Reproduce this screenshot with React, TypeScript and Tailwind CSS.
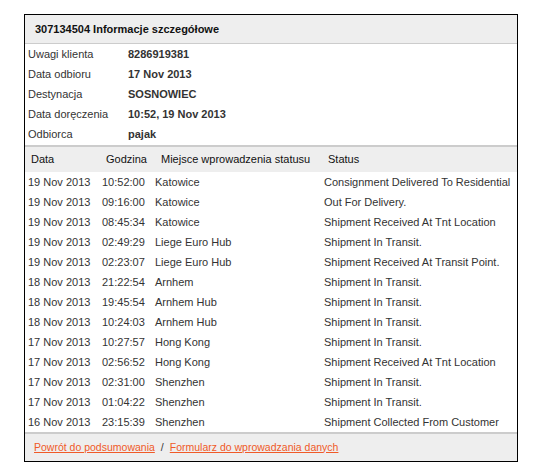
const info = [
  ["Uwagi klienta", "8286919381"],
  ["Data odbioru", "17 Nov 2013"],
  ["Destynacja", "SOSNOWIEC"],
  ["Data doręczenia", "10:52, 19 Nov 2013"],
  ["Odbiorca", "pajak"],
];
const rows = [
  ["19 Nov 2013", "10:52:00", "Katowice", "Consignment Delivered To Residential"],
  ["19 Nov 2013", "09:16:00", "Katowice", "Out For Delivery."],
  ["19 Nov 2013", "08:45:34", "Katowice", "Shipment Received At Tnt Location"],
  ["19 Nov 2013", "02:49:29", "Liege Euro Hub", "Shipment In Transit."],
  ["19 Nov 2013", "02:23:07", "Liege Euro Hub", "Shipment Received At Transit Point."],
  ["18 Nov 2013", "21:22:54", "Arnhem", "Shipment In Transit."],
  ["18 Nov 2013", "19:45:54", "Arnhem Hub", "Shipment In Transit."],
  ["18 Nov 2013", "10:24:03", "Arnhem Hub", "Shipment In Transit."],
  ["17 Nov 2013", "10:27:57", "Hong Kong", "Shipment In Transit."],
  ["17 Nov 2013", "02:56:52", "Hong Kong", "Shipment Received At Tnt Location"],
  ["17 Nov 2013", "02:31:00", "Shenzhen", "Shipment In Transit."],
  ["17 Nov 2013", "01:04:22", "Shenzhen", "Shipment In Transit."],
  ["16 Nov 2013", "23:15:39", "Shenzhen", "Shipment Collected From Customer"],
];
export default function App() {
  return (
    <div className="w-[540px] h-[472px] bg-white pt-[14px] pl-[24px]" style={{ fontFamily: '"Liberation Sans", Arial, sans-serif' }}>
      <div className="w-[494px] border border-black text-[11px] text-[#333]">
        <div className="h-[29px] bg-[#eeeeee] border-b border-[#ccc] flex items-center pl-[10px] font-bold text-[#111] text-[11px]">307134504 Informacje szczegółowe</div>
        <div className="pb-[1px]">
          {info.map(([a, b]) => (
            <div key={a} className="h-[20px] flex items-center">
              <span className="w-[103px] pl-[3px]">{a}</span>
              <span className="font-bold">{b}</span>
            </div>
          ))}
        </div>
        <div className="h-[27px] bg-[#eeeeee] border-t-2 border-[#ccc] flex items-center text-[#111]">
          <span className="w-[74px] pl-[6px]">Data</span>
          <span className="w-[53px] pl-[7px]">Godzina</span>
          <span className="w-[168px] pl-[9px]">Miejsce wprowadzenia statusu</span>
          <span className="pl-[8px]">Status</span>
        </div>
        <div>
          {rows.map((r, i) => (
            <div key={i} className="h-[20px] flex items-center">
              <span className="w-[77px] pl-[3px]">{r[0]}</span>
              <span className="w-[53px]">{r[1]}</span>
              <span className="w-[169px]">{r[2]}</span>
              <span>{r[3]}</span>
            </div>
          ))}
        </div>
        <div className="h-[29px] bg-[#eeeeee] border-t-2 border-[#ccc] flex items-center pl-[9px] text-[10.5px]">
          <span className="text-[#f05a28] underline">Powrót do podsumowania</span>
          <span className="mx-[6px]">/</span>
          <span className="text-[#f05a28] underline">Formularz do wprowadzania danych</span>
        </div>
      </div>
    </div>
  );
}
